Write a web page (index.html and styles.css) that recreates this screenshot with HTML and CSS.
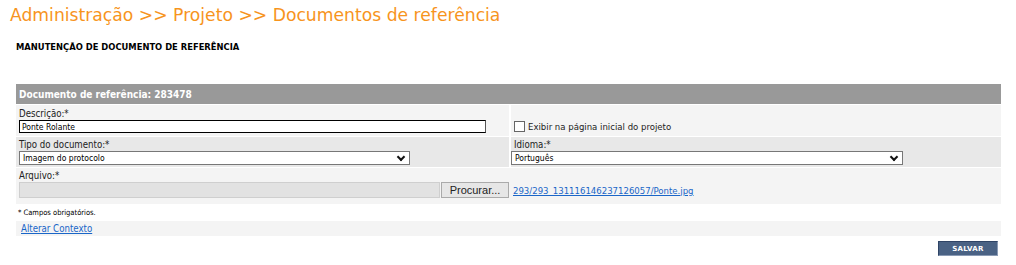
FILE: index.html
```html
<!DOCTYPE html>
<html lang="pt-BR">
<head>
  <meta charset="UTF-8">
  <title>Documentos de referência</title>
  <link rel="stylesheet" href="styles.css">
</head>
<body>
  <h1 class="breadcrumb">Administração &gt;&gt; Projeto &gt;&gt; Documentos de referência</h1>
  <h2 class="page-title">MANUTENÇÃO DE DOCUMENTO DE REFERÊNCIA</h2>

  <div class="panel">
    <div class="panel-header">Documento de referência: 283478</div>

    <div class="row row--light row--first">
      <div class="cell cell--left">
        <label class="field-label">Descrição:*</label>
        <input class="text-input" type="text" value="Ponte Rolante">
      </div>
      <div class="cell cell--right cell--bottom">
        <label class="check"><span class="check-box"></span>Exibir na página inicial do projeto</label>
      </div>
    </div>

    <div class="row row--dark row--second">
      <div class="cell cell--left">
        <label class="field-label">Tipo do documento:*</label>
        <div class="select select--tipo">Imagem do protocolo<span class="chevron"></span></div>
      </div>
      <div class="cell cell--right">
        <label class="field-label">Idioma:*</label>
        <div class="select select--idioma">Português<span class="chevron"></span></div>
      </div>
    </div>

    <div class="row row--light row--file">
      <label class="field-label">Arquivo:*</label>
      <div class="file-line">
        <div class="file-box"></div>
        <div class="file-button">Procurar...</div>
        <a class="file-link" href="#">293/293_131116146237126057/Ponte.jpg</a>
      </div>
    </div>
  </div>

  <p class="required-note">* Campos obrigatórios.</p>

  <div class="context-bar"><a href="#">Alterar Contexto</a></div>

  <div class="actions"><button class="btn-save">SALVAR</button></div>
</body>
</html>
```

FILE: styles.css
```css
body {
  margin: 0;
  padding: 0 15px 0 16px;
  font-family: "DejaVu Sans", Verdana, sans-serif;
  font-stretch: condensed;
  color: #000;
  background: #fff;
}

.breadcrumb {
  margin: 3px 0 0 -6px;
  font-size: 17.2px;
  font-weight: normal;
  font-stretch: normal;
  color: #f7941d;
  line-height: 24px;
}

.page-title {
  margin: 14px 0 0;
  font-size: 8.4px;
  font-weight: bold;
  font-stretch: normal;
  line-height: 12px;
}

.panel {
  margin-top: 31px;
  width: 985px;
}

.panel-header {
  background: #999;
  color: #fff;
  font-weight: bold;
  font-size: 10px;
  height: 20px;
  line-height: 22px;
  padding-left: 3px;
}

.row {
  display: flex;
  border-top: 1px solid #fff;
}

.row--light {
  background: #f4f4f4;
}

.row--dark {
  background: #e8e8e8;
}

.cell {
  padding: 2px 3px 3px;
}

.row--second .cell {
  padding: 1px 3px 2px;
}

.cell--left {
  width: 487px;
  border-right: 2px solid #fff;
}

.cell--right {
  flex: 1;
}

.cell--bottom {
  display: flex;
  align-items: flex-end;
  padding-bottom: 4px;
}

.field-label {
  display: block;
  font-size: 9.6px;
  line-height: 13px;
  color: #222;
}

.text-input {
  display: block;
  box-sizing: border-box;
  width: 467px;
  height: 13px;
  margin: 0;
  padding: 0 2px;
  border: 1px solid #000;
  border-right-color: #555;
  font-family: inherit;
  font-stretch: condensed;
  font-size: 8.5px;
  background: #fff;
}

.check {
  display: flex;
  align-items: center;
  font-size: 9.5px;
  color: #222;
}

.check-box {
  width: 9px;
  height: 9px;
  border: 1px solid #666;
  background: #fff;
  margin-right: 3px;
}

.select {
  position: relative;
  box-sizing: border-box;
  height: 14px;
  border: 1px solid #777;
  background: #fff;
  font-size: 8.5px;
  line-height: 12px;
  padding-left: 3px;
}

.select--tipo {
  width: 391px;
}

.select--idioma {
  width: 392px;
  margin-left: -3px;
}

.chevron {
  position: absolute;
  right: 5px;
  top: 2px;
  width: 4px;
  height: 4px;
  border-right: 2px solid #111;
  border-bottom: 2px solid #111;
  transform: rotate(45deg);
}

.row--file {
  flex-direction: column;
  padding: 1px 3px 6px;
}

.file-line {
  display: flex;
  align-items: center;
}

.file-box {
  width: 421px;
  height: 16px;
  background: #e2e2e2;
  border: 1px solid #cfcfcf;
  box-sizing: border-box;
}

.file-button {
  box-sizing: border-box;
  width: 68px;
  height: 16px;
  margin-left: 1px;
  border: 1px solid #aaa;
  background: #e6e6e6;
  font-family: "Liberation Sans", Arial, sans-serif;
  font-size: 11px;
  line-height: 14px;
  text-align: center;
  color: #222;
}

.file-link {
  margin-left: 4px;
  font-size: 9.5px;
  color: #1a66c8;
}

.required-note {
  margin: 4px 0 0 2px;
  font-size: 7.5px;
  line-height: 10px;
}

.context-bar {
  width: 980px;
  margin-top: 3px;
  background: #f4f4f4;
  height: 15px;
  line-height: 16px;
  padding-left: 5px;
  font-size: 9.6px;
}

.context-bar a {
  color: #1a66c8;
}

.actions {
  width: 982px;
  text-align: right;
  margin-top: 5px;
}

.btn-save {
  display: inline-block;
  width: 60px;
  height: 15px;
  padding: 0;
  background: #4a6284;
  border: 1px solid #2f4466;
  border-right-color: #8a9ab4;
  border-bottom-color: #8a9ab4;
  color: #fff;
  font-family: inherit;
  font-stretch: normal;
  font-weight: bold;
  font-size: 7px;
  letter-spacing: 0.3px;
  vertical-align: top;
}
```
